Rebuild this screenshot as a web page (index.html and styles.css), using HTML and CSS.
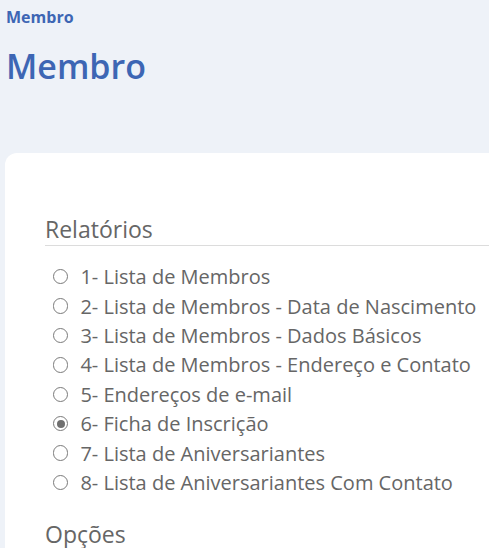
FILE: index.html
```html
<!DOCTYPE html>
<html lang="pt">
<head>
<meta charset="utf-8">
<link rel="stylesheet" href="styles.css">
</head>
<body>
<div class="page">
  <div class="crumb">Membro</div>
  <h1 class="title">Membro</h1>
  <div class="card">
    <div class="section">Relatórios</div>
    <ul class="radios">
      <li class="row"><span class="radio"></span><span>1- Lista de Membros</span></li>
      <li class="row"><span class="radio"></span><span>2- Lista de Membros - Data de Nascimento</span></li>
      <li class="row"><span class="radio"></span><span>3- Lista de Membros - Dados Básicos</span></li>
      <li class="row"><span class="radio"></span><span>4- Lista de Membros - Endereço e Contato</span></li>
      <li class="row"><span class="radio"></span><span>5- Endereços de e-mail</span></li>
      <li class="row"><span class="radio checked"></span><span>6- Ficha de Inscrição</span></li>
      <li class="row"><span class="radio"></span><span>7- Lista de Aniversariantes</span></li>
      <li class="row"><span class="radio"></span><span>8- Lista de Aniversariantes Com Contato</span></li>
    </ul>
    <div class="section plain">Opções</div>
  </div>
</div>
</body>
</html>
```

FILE: styles.css
```css
html, body {
  margin: 0;
  padding: 0;
  background: #eef2f8;
  font-family: "Open Sans", "Noto Sans", sans-serif;
  overflow: hidden;
}
.page {
  padding: 6px 0 0 5px;
}
.crumb {
  font-size: 16px;
  font-weight: 700;
  color: #3d66b4;
  line-height: 22px;
  padding-left: 1px;
}
.title {
  margin: 16px 0 0 0;
  font-size: 34px;
  font-weight: 600;
  color: #3d66b4;
  line-height: 44px;
  padding-left: 1px;
}
.card {
  margin-top: 65px;
  background: #ffffff;
  border-radius: 12px 0 0 0;
  padding: 61px 0 30px 40px;
  min-height: 400px;
}
.section {
  font-size: 23px;
  line-height: 30px;
  color: #666666;
  padding-bottom: 1px;
  border-bottom: 1px solid #dcdcdc;
}
.section.plain {
  border-bottom: none;
  margin-top: 22px;
}
.radios {
  list-style: none;
  margin: 16px 0 0 0;
  padding: 0 0 0 8px;
}
.row {
  display: flex;
  align-items: center;
  gap: 12px;
  height: 29.4px;
  font-size: 20px;
  color: #666666;
  white-space: nowrap;
}
.radio {
  flex: none;
  width: 13.4px;
  height: 13.4px;
  border: 1.3px solid #7a7a7a;
  border-radius: 50%;
  box-sizing: content-box;
  position: relative;
}
.radio.checked::after {
  content: "";
  position: absolute;
  left: 2.7px;
  top: 2.7px;
  width: 8px;
  height: 8px;
  border-radius: 50%;
  background: #6f6f6f;
}
```
